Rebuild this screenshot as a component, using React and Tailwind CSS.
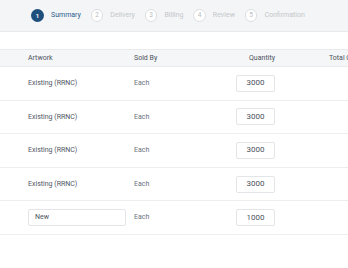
import React from "react";

const steps = ["Summary", "Delivery", "Billing", "Review", "Confirmation"];
const rows = [
  { art: "Existing (RRNC)", qty: "3000" },
  { art: "Existing (RRNC)", qty: "3000" },
  { art: "Existing (RRNC)", qty: "3000" },
  { art: "Existing (RRNC)", qty: "3000" },
  { art: "New", qty: "1000", input: true },
];

export default function App() {
  return (
    <div className="w-[348px] h-[268px] overflow-hidden bg-white" style={{ fontFamily: "Roboto, 'Liberation Sans', sans-serif" }}>
      <div className="h-[32px] bg-[#f4f5f6] border-b border-[#e7e9eb] flex items-center pl-[31px] gap-[10px]">
        {steps.map((s, i) => (
          <div key={s} className="flex items-center gap-[7px]">
            {i === 0 ? (
              <div className="w-[13px] h-[13px] rounded-full bg-[#1e4f7d] text-white text-[6px] font-bold flex items-center justify-center">1</div>
            ) : (
              <div className="w-[12.5px] h-[12.5px] rounded-full bg-white border border-[#dcdfe2] text-[#b9bdc2] text-[6.5px] flex items-center justify-center">{i + 1}</div>
            )}
            <span className={i === 0 ? "text-[7px] text-[#2c5e8f]" : "text-[7px] text-[#c3c7cb]"}>{s}</span>
          </div>
        ))}
      </div>
      <div className="h-[17px]" />
      <div className="h-[18px] bg-[#f5f6f7] border-y border-[#e8eaec] flex items-center pl-[28px] text-[7px] text-[#4b5260] whitespace-nowrap">
        <div className="w-[106px] shrink-0">Artwork</div>
        <div className="w-[102px] shrink-0">Sold By</div>
        <div className="w-[39px] shrink-0 text-right">Quantity</div>
        <div className="w-[54px] shrink-0" />
        <div className="shrink-0">Total Cost</div>
      </div>
      {rows.map((r, i) => (
        <div key={i} className="h-[33.6px] border-b border-[#eceef0] flex items-center pl-[28px] text-[7px] text-[#5d6470] whitespace-nowrap">
          <div className="w-[106px] shrink-0">
            {r.input ? (
              <div className="w-[98px] h-[17px] border border-[#e3e5e8] rounded-[2px] flex items-center pl-[6px] text-[#4b5260]">{r.art}</div>
            ) : (
              <span className="text-[#4f5663]">{r.art}</span>
            )}
          </div>
          <div className="w-[102px] shrink-0 text-[#6b717c]">Each</div>
          <div className="w-[39px] h-[17px] shrink-0 border border-[#e3e5e8] rounded-[2px] flex items-center justify-center text-[8px] text-[#4b5260]">{r.qty}</div>
        </div>
      ))}
    </div>
  );
}
